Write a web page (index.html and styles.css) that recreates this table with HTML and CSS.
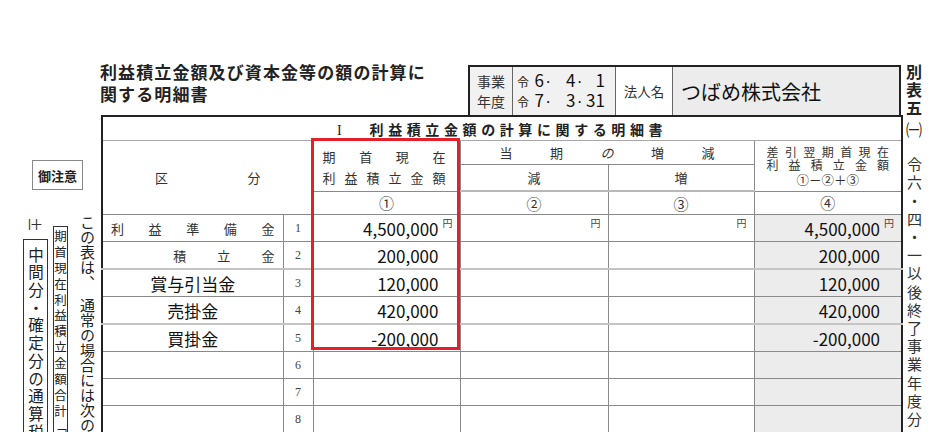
FILE: index.html
```html
<!DOCTYPE html>
<html lang="ja">
<head>
<meta charset="utf-8">
<title>別表五(一)</title>
<link rel="stylesheet" href="styles.css">
</head>
<body>
<div class="page">
  <aside class="left">
    <div class="notice">御注意</div>
    <div class="notes">
      <div class="note-col3">
        <span class="pm">±</span>
        <div class="vbox wide">中間分・確定分の通算税効果額の合計額</div>
      </div>
      <div class="vbox narrow">期首現在利益積立金額合計「31」①</div>
      <div class="vtext note1">この表は、　通常の場合には次の式により検算ができます。</div>
    </div>
  </aside>

  <main class="main">
    <header class="head">
      <h1 class="title">利益積立金額及び資本金等の額の計算に<br>関する明細書</h1>
      <div class="infobox">
        <div class="ib-label">事業<br>年度</div>
        <div class="ib-dates">
          <div class="dline"><span class="rei">令</span><span class="yy">6</span><span class="dot">·</span><span class="mm">4</span><span class="dot">·</span><span class="dd">1</span></div>
          <div class="dline"><span class="rei">令</span><span class="yy">7</span><span class="dot">·</span><span class="mm">3</span><span class="dot">·</span><span class="dd">31</span></div>
        </div>
        <div class="ib-name-label">法人名</div>
        <div class="ib-name">つばめ株式会社</div>
      </div>
    </header>

    <div class="table-wrap">
      <table class="sheet">
        <colgroup>
          <col class="c-kubun"><col class="c-no"><col class="c-1"><col class="c-2"><col class="c-3"><col class="c-4">
        </colgroup>
        <tr class="r-title">
          <th colspan="6"><span class="roman">I</span>利益積立金額の計算に関する明細書</th>
        </tr>
        <tr class="r-ha">
          <th colspan="2" rowspan="3" class="kubun"><div class="just"><span>区</span><span>分</span></div></th>
          <th rowspan="2" class="h1">
            <div class="just"><span>期</span><span>首</span><span>現</span><span>在</span></div>
            <div class="just"><span>利</span><span>益</span><span>積</span><span>立</span><span>金</span><span>額</span></div>
          </th>
          <th colspan="2" class="zogen"><div class="just"><span>当</span><span>期</span><span class="no-mark">の</span><span>増</span><span>減</span></div></th>
          <th rowspan="2" class="h4">
            <div class="just"><span>差</span><span>引</span><span>翌</span><span>期</span><span>首</span><span>現</span><span>在</span></div>
            <div class="just"><span>利</span><span>益</span><span>積</span><span>立</span><span>金</span><span>額</span></div>
            <div class="formula">①－②＋③</div>
          </th>
        </tr>
        <tr class="r-hb">
          <th class="sub">減</th>
          <th class="sub">増</th>
        </tr>
        <tr class="r-circ">
          <th>①</th><th>②</th><th>③</th><th>④</th>
        </tr>
        <tr class="r-data">
          <td class="name"><div class="just5"><span>利</span><span>益</span><span>準</span><span>備</span><span>金</span></div></td>
          <td class="no">1</td>
          <td class="amt">4,500,000<span class="yen">円</span></td>
          <td class="amt"><span class="yen">円</span></td>
          <td class="amt"><span class="yen">円</span></td>
          <td class="amt g">4,500,000<span class="yen">円</span></td>
        </tr>
        <tr class="r-data">
          <td class="name"><div class="just5"><span></span><span></span><span>積</span><span>立</span><span>金</span></div></td>
          <td class="no">2</td>
          <td class="amt">200,000</td>
          <td class="amt"></td>
          <td class="amt"></td>
          <td class="amt g">200,000</td>
        </tr>
        <tr class="r-data dbl">
          <td class="name big">賞与引当金</td>
          <td class="no">3</td>
          <td class="amt">120,000</td>
          <td class="amt"></td>
          <td class="amt"></td>
          <td class="amt g">120,000</td>
        </tr>
        <tr class="r-data">
          <td class="name big">売掛金</td>
          <td class="no">4</td>
          <td class="amt">420,000</td>
          <td class="amt"></td>
          <td class="amt"></td>
          <td class="amt g">420,000</td>
        </tr>
        <tr class="r-data dbl">
          <td class="name big">買掛金</td>
          <td class="no">5</td>
          <td class="amt">-200,000</td>
          <td class="amt"></td>
          <td class="amt"></td>
          <td class="amt g">-200,000</td>
        </tr>
        <tr class="r-data">
          <td class="name"></td><td class="no">6</td><td class="amt"></td><td class="amt"></td><td class="amt"></td><td class="amt g"></td>
        </tr>
        <tr class="r-data">
          <td class="name"></td><td class="no">7</td><td class="amt"></td><td class="amt"></td><td class="amt"></td><td class="amt g"></td>
        </tr>
        <tr class="r-data">
          <td class="name"></td><td class="no">8</td><td class="amt"></td><td class="amt"></td><td class="amt"></td><td class="amt g"></td>
        </tr>
        <tr class="r-data">
          <td class="name"></td><td class="no">9</td><td class="amt"></td><td class="amt"></td><td class="amt"></td><td class="amt g"></td>
        </tr>
      </table>
      <div class="highlight"></div>
    </div>
  </main>

  <aside class="right">
    <div class="vr bt">別表五</div>
    <div class="vr paren">㈠</div>
    <div class="vr period">令六・四・一以後終了事業年度分</div>
  </aside>
</div>
</body>
</html>
```

FILE: styles.css
```css
html, body {
  margin: 0;
  padding: 0;
  overflow: hidden;
  background: #fff;
}
body {
  font-family: "Noto Sans CJK JP", "Noto Sans", sans-serif;
  color: #222;
}
.page {
  display: flex;
  width: 947px;
  height: 432px;
  overflow: hidden;
}

/* ---------- left notes ---------- */
.left {
  width: 101px;
  flex: none;
  padding-top: 160px;
  box-sizing: border-box;
}
.notice {
  margin-left: 32px;
  width: 51px;
  height: 30px;
  box-sizing: border-box;
  border: 1px solid #888;
  display: flex;
  align-items: center;
  justify-content: center;
  font-size: 13px;
  font-weight: 700;
  color: #222;
}
.notes {
  display: flex;
  align-items: flex-start;
  padding-left: 23px;
  margin-top: 23px;
}
.note-col3 {
  width: 25px;
  margin-right: 5px;
  display: flex;
  flex-direction: column;
  align-items: center;
}
.pm {
  display: block;
  width: 15px;
  height: 15px;
  font-size: 15px;
  line-height: 15px;
  text-align: center;
  margin-top: 4px;
  transform: rotate(90deg);
  color: #333;
}
.vbox {
  writing-mode: vertical-rl;
  white-space: nowrap;
  border: 1px solid #333;
  box-sizing: border-box;
  color: #222;
}
.vbox.wide {
  width: 25px;
  height: 240px;
  margin-top: 7px;
  font-size: 15.5px;
  line-height: 23px;
  letter-spacing: 2.2px;
  padding-top: 7px;
}
.vbox.narrow {
  width: 15px;
  height: 230px;
  margin-top: 13px;
  margin-right: 11px;
  font-size: 12.5px;
  line-height: 13px;
  letter-spacing: 3.4px;
  padding-top: 3px;
}
.vtext {
  writing-mode: vertical-rl;
  white-space: nowrap;
}
.note1 {
  width: 17px;
  font-size: 15px;
  line-height: 17px;
  margin-top: 2px;
  color: #222;
}

/* ---------- main ---------- */
.main {
  width: 800px;
  flex: none;
  padding-top: 61px;
  box-sizing: border-box;
}
.head {
  display: flex;
  height: 54px;
}
.title {
  flex: 1;
  margin: 0 0 0 -1px;
  font-size: 17px;
  font-weight: 700;
  line-height: 22px;
  letter-spacing: 1.1px;
  color: #222;
}
.infobox {
  align-self: flex-end;
  width: 433px;
  height: 50px;
  box-sizing: border-box;
  border: 2px solid #222;
  border-bottom: none;
  display: grid;
  grid-template-columns: 43px 103px 57px 1fr;
}
.infobox > div {
  border-right: 1px solid #666;
}
.infobox > div:last-child {
  border-right: none;
}
.ib-label {
  background: #f1f1f1;
  font-size: 14px;
  line-height: 20px;
  text-align: center;
  padding-top: 4px;
  color: #333;
}
.ib-dates {
  background: #f1f1f1;
  padding: 3px 0 0 4px;
}
.dline {
  display: flex;
  align-items: baseline;
  height: 20px;
  line-height: 20px;
  color: #111;
}
.rei {
  width: 15px;
  font-size: 12px;
}
.yy, .mm, .dd {
  font-size: 17px;
  text-align: right;
}
.yy { width: 12px; }
.mm { width: 23px; }
.dd { width: 21px; }
.dot {
  font-size: 15px;
  text-align: center;
}
.dline .dot:nth-of-type(1) { width: 8px; }
.dline .dot:nth-of-type(2) { width: 9px; }
.ib-name-label {
  background: #fff;
  font-size: 13.5px;
  display: flex;
  align-items: center;
  justify-content: center;
  color: #333;
}
.ib-name {
  background: #ececec;
  font-size: 20px;
  display: flex;
  align-items: center;
  padding-left: 8px;
  color: #111;
}

/* ---------- table ---------- */
.table-wrap {
  position: relative;
}
.sheet {
  width: 800px;
  border-collapse: collapse;
  table-layout: fixed;
  border: 2px solid #222;
}
.c-kubun { width: 181px; }
.c-no { width: 30px; }
.c-1 { width: 147px; }
.c-2 { width: 148px; }
.c-3 { width: 146px; }
.c-4 { width: 148px; }
.sheet th, .sheet td {
  border: 1px solid #8a8a8a;
  padding: 0;
  font-weight: 400;
  vertical-align: middle;
}
.r-title th {
  height: 23px;
  font-size: 14px;
  font-weight: 700;
  letter-spacing: 4.6px;
  text-align: center;
  color: #222;
  border-bottom-color: #a8a8a8;
}
.roman {
  font-family: "Liberation Serif", serif;
  font-weight: 400;
  letter-spacing: 0;
  margin-right: 28px;
}
.r-ha th { height: 23px; }
.r-hb th { height: 25px; border-bottom: 2px solid #b8b8b8; }
.r-circ th {
  height: 22px;
  font-size: 15px;
  color: #333;
  text-align: center;
}
.r-data td { height: 26px; }
.r-data.dbl td { border-top: 2px solid #c4c4c4; }

.just, .just5 {
  display: flex;
  justify-content: space-between;
}
.kubun {
  font-size: 13px;
  color: #333;
}
.kubun .just { padding: 0 52px; }
.h1 {
  font-size: 13px;
  color: #333;
  line-height: 21px;
  padding-top: 2px !important;
}
.h1 .just { padding: 0 14px 0 9px; }
.zogen {
  font-size: 13px;
  color: #333;
}
.zogen .just { padding: 0 39px; }
.no-mark { font-style: italic; }
.sub {
  font-size: 13px;
  color: #333;
  text-align: center;
}
.h4 {
  font-size: 12px;
  line-height: 13.5px;
  color: #333;
}
.h4 .just { padding: 0 12px; }
.formula {
  text-align: center;
  font-size: 12.5px;
  line-height: 15px;
}

.name {
  font-size: 13px;
  color: #333;
}
.name .just5 { padding: 0 8px; }
.name.big {
  font-size: 17px;
  color: #111;
  text-align: center;
}
.no {
  font-family: "Liberation Serif", serif;
  font-size: 12px;
  color: #444;
  text-align: center;
}
.amt {
  position: relative;
  font-size: 17px;
  text-align: right;
  padding-right: 21px !important;
  color: #111;
}
.amt.g { background: #ececec; }
.yen {
  position: absolute;
  top: 3px;
  right: 7px;
  font-size: 10px;
  line-height: 10px;
  color: #444;
}
.highlight {
  position: absolute;
  left: 210px;
  top: 23px;
  width: 149px;
  height: 212px;
  box-sizing: border-box;
  border: 3px solid #e5202b;
  pointer-events: none;
}

/* ---------- right side ---------- */
.right {
  flex: 1;
  display: flex;
  flex-direction: column;
  padding: 64px 0 0 3px;
}
.vr {
  writing-mode: vertical-rl;
  white-space: nowrap;
  width: 20px;
  line-height: 20px;
  text-align: start;
  color: #222;
}
.bt {
  font-size: 16px;
  font-weight: 700;
  letter-spacing: 2px;
}
.paren {
  font-size: 16px;
  margin-top: 4px;
}
.period {
  font-size: 15px;
  letter-spacing: 3.2px;
  margin-top: 19px;
  color: #333;
}
```
